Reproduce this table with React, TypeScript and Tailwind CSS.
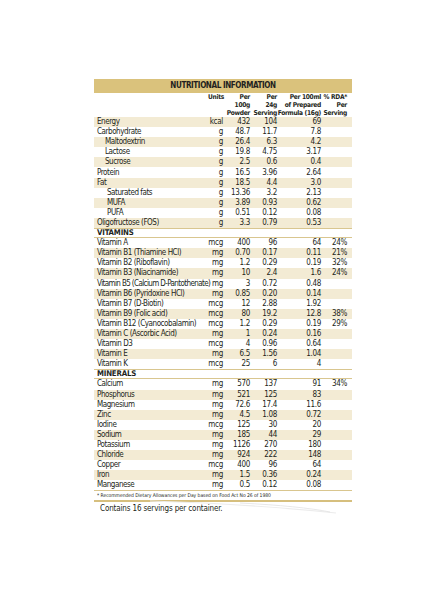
import * as React from 'react';

type Row = {
  label: string;
  unit?: string;
  a?: string;
  b?: string;
  c?: string;
  rda?: string;
  indent?: 0 | 1 | 2;
  shaded?: boolean;
  section?: boolean;
  tight?: boolean;
};

const rows: Row[] = [
  { label: 'Energy', unit: 'kcal', a: '432', b: '104', c: '69', shaded: true },
  { label: 'Carbohydrate', unit: 'g', a: '48.7', b: '11.7', c: '7.8' },
  { label: 'Maltodextrin', unit: 'g', a: '26.4', b: '6.3', c: '4.2', indent: 1, shaded: true },
  { label: 'Lactose', unit: 'g', a: '19.8', b: '4.75', c: '3.17', indent: 1 },
  { label: 'Sucrose', unit: 'g', a: '2.5', b: '0.6', c: '0.4', indent: 1, shaded: true },
  { label: 'Protein', unit: 'g', a: '16.5', b: '3.96', c: '2.64' },
  { label: 'Fat', unit: 'g', a: '18.5', b: '4.4', c: '3.0', shaded: true },
  { label: 'Saturated fats', unit: 'g', a: '13.36', b: '3.2', c: '2.13', indent: 2 },
  { label: 'MUFA', unit: 'g', a: '3.89', b: '0.93', c: '0.62', indent: 2, shaded: true },
  { label: 'PUFA', unit: 'g', a: '0.51', b: '0.12', c: '0.08', indent: 2 },
  { label: 'Oligofructose (FOS)', unit: 'g', a: '3.3', b: '0.79', c: '0.53', shaded: true },
  { label: 'VITAMINS', section: true },
  { label: 'Vitamin A', unit: 'mcg', a: '400', b: '96', c: '64', rda: '24%' },
  { label: 'Vitamin B1 (Thiamine HCl)', unit: 'mg', a: '0.70', b: '0.17', c: '0.11', rda: '21%', shaded: true },
  { label: 'Vitamin B2 (Riboflavin)', unit: 'mg', a: '1.2', b: '0.29', c: '0.19', rda: '32%' },
  { label: 'Vitamin B3 (Niacinamide)', unit: 'mg', a: '10', b: '2.4', c: '1.6', rda: '24%', shaded: true },
  { label: 'Vitamin B5 (Calcium D-Pantothenate)', unit: 'mg', a: '3', b: '0.72', c: '0.48', tight: true },
  { label: 'Vitamin B6 (Pyridoxine HCl)', unit: 'mg', a: '0.85', b: '0.20', c: '0.14', shaded: true },
  { label: 'Vitamin B7 (D-Biotin)', unit: 'mcg', a: '12', b: '2.88', c: '1.92' },
  { label: 'Vitamin B9 (Folic acid)', unit: 'mcg', a: '80', b: '19.2', c: '12.8', rda: '38%', shaded: true },
  { label: 'Vitamin B12 (Cyanocobalamin)', unit: 'mcg', a: '1.2', b: '0.29', c: '0.19', rda: '29%' },
  { label: 'Vitamin C (Ascorbic Acid)', unit: 'mg', a: '1', b: '0.24', c: '0.16', shaded: true },
  { label: 'Vitamin D3', unit: 'mcg', a: '4', b: '0.96', c: '0.64' },
  { label: 'Vitamin E', unit: 'mg', a: '6.5', b: '1.56', c: '1.04', shaded: true },
  { label: 'Vitamin K', unit: 'mcg', a: '25', b: '6', c: '4' },
  { label: 'MINERALS', section: true },
  { label: 'Calcium', unit: 'mg', a: '570', b: '137', c: '91', rda: '34%' },
  { label: 'Phosphorus', unit: 'mg', a: '521', b: '125', c: '83', shaded: true },
  { label: 'Magnesium', unit: 'mg', a: '72.6', b: '17.4', c: '11.6' },
  { label: 'Zinc', unit: 'mg', a: '4.5', b: '1.08', c: '0.72', shaded: true },
  { label: 'Iodine', unit: 'mcg', a: '125', b: '30', c: '20' },
  { label: 'Sodium', unit: 'mg', a: '185', b: '44', c: '29', shaded: true },
  { label: 'Potassium', unit: 'mg', a: '1126', b: '270', c: '180' },
  { label: 'Chloride', unit: 'mg', a: '924', b: '222', c: '148', shaded: true },
  { label: 'Copper', unit: 'mcg', a: '400', b: '96', c: '64' },
  { label: 'Iron', unit: 'mg', a: '1.5', b: '0.36', c: '0.24', shaded: true },
  { label: 'Manganese', unit: 'mg', a: '0.5', b: '0.12', c: '0.08' },
];

const indentClass = ['pl-[3px]', 'pl-[11px]', 'pl-[13px]'];

function TableRow({ row }: { row: Row }) {
  if (row.section) {
    return (
      <div className="flex h-[10.1px] items-center border-y border-[#d9c68f] pl-[3px] text-[7.8px] font-bold leading-none tracking-[-0.2px]">
        {row.label}
      </div>
    );
  }
  return (
    <div
      className={`flex h-[10.1px] items-center text-[8px] leading-none tracking-[-0.3px] ${
        row.shaded ? 'bg-[#f3ebd4]' : ''
      }`}
    >
      <div
        className={`w-[114px] whitespace-nowrap ${row.tight ? 'tracking-[-0.62px]' : 'tracking-[-0.45px]'} ${
          indentClass[row.indent ?? 0]
        }`}
      >
        {row.label}
      </div>
      <div className="w-[15px] text-right">{row.unit}</div>
      <div className="w-[27px] text-right">{row.a}</div>
      <div className="w-[27px] text-right">{row.b}</div>
      <div className="w-[44px] text-right">{row.c}</div>
      <div className="w-[26px] text-right">{row.rda}</div>
    </div>
  );
}

export default function App() {
  return (
    <div className="relative h-[590px] w-[442px] bg-white font-['DejaVu_Sans_Condensed','Liberation_Sans_Narrow',sans-serif] text-[#231f20]">
      <div className="pl-[94px] pt-[79px]">
        <div className="w-[258px]">
          {/* title bar */}
          <div className="flex h-[14px] items-center justify-center bg-[#dac27c] text-[8px] font-bold leading-none tracking-[-0.4px]">
            NUTRITIONAL INFORMATION
          </div>

          {/* column headers */}
          <div className="flex h-[24px] items-start text-[6.6px] font-bold leading-[8.2px] tracking-[-0.3px]">
            <div className="w-[114px]" />
            <div className="w-[15px] text-right">Units</div>
            <div className="w-[27px] text-right">
              Per
              <br />
              100g
              <br />
              Powder
            </div>
            <div className="w-[27px] text-right">
              Per
              <br />
              24g
              <br />
              Serving
            </div>
            <div className="w-[44px] whitespace-nowrap text-right">
              Per 100ml
              <br />
              of Prepared
              <br />
              Formula (16g)
            </div>
            <div className="w-[26px] whitespace-nowrap text-right">
              % RDA*
              <br />
              Per
              <br />
              Serving
            </div>
          </div>

          {rows.map((row) => (
            <TableRow key={row.label} row={row} />
          ))}

          <div className="h-px bg-[#d9c68f]" />
          <div className="flex h-[9px] items-center pl-[3px] text-[5px] leading-none tracking-[-0.05px]">
            * Recommended Dietary Allowances per Day based on Food Act No 26 of 1980
          </div>
          <div className="h-[2px] bg-[#d6bf7e]" />
          <div className="pl-[6px] pt-[2px] text-[8px] leading-[10px] tracking-[-0.15px]">
            Contains 16 servings per container.
          </div>
        </div>
      </div>

      {/* faint page curl shadow */}
      <svg className="pointer-events-none absolute left-0 top-0" width="442" height="590">
        <path d="M150 501 Q 250 504 336 513" stroke="#ececec" strokeWidth="1.2" fill="none" />
        <path d="M240 503 Q 300 506 330 512" stroke="#e2e2e2" strokeWidth="0.8" fill="none" />
      </svg>
    </div>
  );
}
